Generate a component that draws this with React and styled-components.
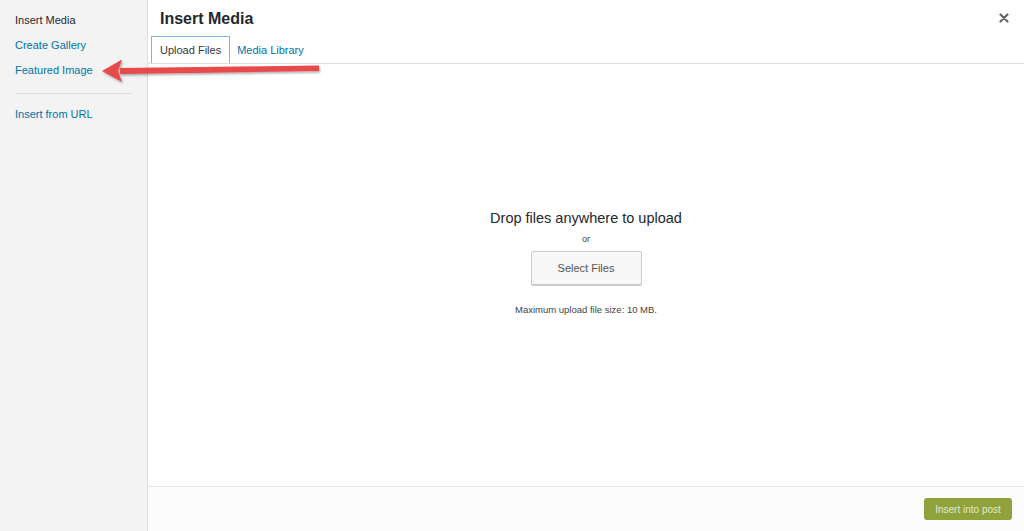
import React from 'react';
import styled, { createGlobalStyle } from 'styled-components';

const Global = createGlobalStyle`
  html, body {
    margin: 0;
    padding: 0;
    background: #fff;
  }
  body {
    font-family: "Liberation Sans", Arial, sans-serif;
    color: #23282d;
  }
`;

const menu = [
  { label: 'Insert Media', active: true },
  { label: 'Create Gallery' },
  { label: 'Featured Image' },
  { sep: true },
  { label: 'Insert from URL' },
];

export default function App() {
  return (
    <>
      <Global />
      <Frame>
        <Sidebar>
          {menu.map((item, i) =>
            item.sep ? (
              <Separator key={i} />
            ) : (
              <MenuItem key={i} active={item.active}>
                {item.label}
              </MenuItem>
            )
          )}
        </Sidebar>
        <Main>
          <Header>
            <Title>Insert Media</Title>
            <Close aria-label="Close">
              <svg width="10" height="10" viewBox="0 0 10 10">
                <path d="M1.5 1.5 L8.5 8.5 M8.5 1.5 L1.5 8.5" stroke="#666" strokeWidth="2.2" strokeLinecap="round" />
              </svg>
            </Close>
          </Header>
          <Tabs>
            <Tab active>Upload Files</Tab>
            <Tab>Media Library</Tab>
          </Tabs>
          <Content>
            <DropTitle>Drop files anywhere to upload</DropTitle>
            <Or>or</Or>
            <SelectButton>Select Files</SelectButton>
            <MaxSize>Maximum upload file size: 10 MB.</MaxSize>
          </Content>
          <Footer>
            <PrimaryButton>Insert into post</PrimaryButton>
          </Footer>
        </Main>
        <Arrow width="240" height="40" viewBox="0 0 240 40">
          <defs>
            <filter id="sh" x="-10%" y="-50%" width="120%" height="200%">
              <feDropShadow dx="1" dy="1.5" stdDeviation="1.2" floodColor="#000" floodOpacity="0.35" />
            </filter>
          </defs>
          <g filter="url(#sh)">
            <path d="M22 15 L221 12.5 L221 18 L22 21 Z" fill="#e8484b" />
            <path d="M4 18 L24 6.5 L20 18 L24 29 Z" fill="#e8484b" />
          </g>
        </Arrow>
      </Frame>
    </>
  );
}

const Frame = styled.div`
  position: relative;
  display: flex;
  width: 1024px;
  height: 531px;
  overflow: hidden;
`;

const Sidebar = styled.nav`
  width: 147px;
  flex-shrink: 0;
  background: #f3f3f3;
  border-right: 1px solid #dddddd;
  padding-top: 13px;
  box-sizing: content-box;
`;

const MenuItem = styled.div`
  font-size: 11px;
  line-height: 14px;
  padding: 0 15px;
  margin-bottom: 11px;
  color: ${p => (p.active ? '#23282d' : '#0073aa')};
`;

const Separator = styled.div`
  height: 1px;
  background: #dcdcdc;
  margin: 16px 15px 13px;
`;

const Main = styled.div`
  flex: 1;
  display: flex;
  flex-direction: column;
  background: #fff;
`;

const Header = styled.div`
  height: 36px;
  display: flex;
  align-items: center;
  justify-content: space-between;
  padding: 0 12px 0 12px;
`;

const Title = styled.h1`
  margin: 0;
  font-size: 16px;
  font-weight: 600;
  color: #23282d;
  padding-top: 1px;
`;

const Close = styled.div`
  width: 16px;
  height: 16px;
  display: flex;
  align-items: center;
  justify-content: center;
`;

const Tabs = styled.div`
  display: flex;
  padding-left: 3px;
  border-bottom: 1px solid #dddddd;
  height: 27px;
`;

const Tab = styled.div`
  display: flex;
  align-items: center;
  padding: 0 8px 0 ${p => (p.active ? '8px' : '6px')};
  font-size: 11px;
  height: 27px;
  box-sizing: border-box;
  color: ${p => (p.active ? '#32373c' : '#0073aa')};
  border: 1px solid ${p => (p.active ? '#7fb2e0' : 'transparent')};
  border-bottom: none;
  background: #fff;
`;

const Content = styled.div`
  flex: 1;
  display: flex;
  flex-direction: column;
  align-items: center;
  padding-top: 145px;
`;

const DropTitle = styled.div`
  font-size: 14.5px;
  color: #23282d;
  line-height: 18px;
`;

const Or = styled.div`
  font-size: 9px;
  color: #444;
  margin-top: 7px;
`;

const SelectButton = styled.div`
  margin-top: 7px;
  width: 111px;
  height: 34px;
  box-sizing: border-box;
  background: #f7f7f7;
  border: 1px solid #cccccc;
  border-radius: 2px;
  box-shadow: 0 1px 0 #cccccc;
  display: flex;
  align-items: center;
  justify-content: center;
  font-size: 11px;
  color: #555;
`;

const MaxSize = styled.div`
  margin-top: 19px;
  font-size: 9.5px;
  color: #444;
`;

const Footer = styled.div`
  height: 44px;
  border-top: 1px solid #e5e5e5;
  background: #fcfcfc;
  display: flex;
  align-items: center;
  justify-content: flex-end;
  padding-right: 12px;
`;

const PrimaryButton = styled.div`
  width: 88px;
  height: 22px;
  border-radius: 3px;
  background: #8fa23c;
  color: #e4e9cc;
  font-size: 10px;
  display: flex;
  align-items: center;
  justify-content: center;
`;

const Arrow = styled.svg`
  position: absolute;
  left: 98px;
  top: 53px;
  pointer-events: none;
`;
